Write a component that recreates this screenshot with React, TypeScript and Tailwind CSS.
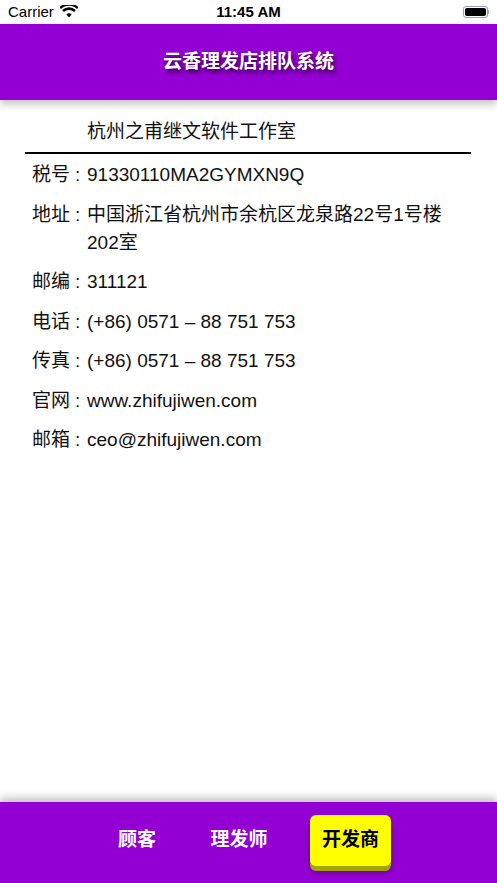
const rows: { label: string; value: string }[] = [
  { label: "税号", value: "91330110MA2GYMXN9Q" },
  { label: "地址", value: "中国浙江省杭州市余杭区龙泉路22号1号楼202室" },
  { label: "邮编", value: "311121" },
  { label: "电话", value: "(+86) 0571 – 88 751 753" },
  { label: "传真", value: "(+86) 0571 – 88 751 753" },
  { label: "官网", value: "www.zhifujiwen.com" },
  { label: "邮箱", value: "ceo@zhifujiwen.com" },
];

const font = {
  fontFamily: '"Liberation Sans", "Noto Sans CJK SC", sans-serif',
};

function StatusBar() {
  return (
    <div className="h-6 flex items-center justify-between px-2 bg-white text-black">
      <div className="flex items-center gap-1.5 text-[15px]">
        <span>Carrier</span>
        <svg width="18" height="13" viewBox="0 0 18 13" className="mt-[-2px]">
          <path d="M9 12.5l2.6-3a3.6 3.6 0 00-5.2 0z" fill="black" />
          <path d="M3.9 7a7.2 7.2 0 0110.2 0l1.7-1.9a9.8 9.8 0 00-13.6 0z" fill="black" />
          <path d="M1 4a11.6 11.6 0 0116 0L18.6 2.2a14.2 14.2 0 00-19.2 0z" fill="black" />
        </svg>
      </div>
      <div className="text-[15px] font-semibold absolute left-1/2 -translate-x-1/2">11:45 AM</div>
      <div className="flex items-center">
        <div className="w-[25px] h-[12px] rounded-[3px] border border-gray-400 p-[1px]">
          <div className="w-full h-full bg-black rounded-[2px]" />
        </div>
        <div className="w-[1.5px] h-[4px] bg-gray-400 rounded-r" />
      </div>
    </div>
  );
}

export default function App() {
  return (
    <div className="w-[497px] h-[883px] flex flex-col bg-white relative overflow-hidden" style={font}>
      <StatusBar />

      {/* Title bar */}
      <div className="h-[76px] bg-[#9400d3] flex items-center justify-center shadow-[0_4px_8px_rgba(0,0,0,0.25)] z-10">
        <span className="text-white text-[19px] font-bold [text-shadow:2px_3px_4px_rgba(40,0,60,0.9)]">
          云香理发店排队系统
        </span>
      </div>

      {/* Content */}
      <div className="flex-1 px-[25px] pt-[18px] text-[19px] text-[#111]">
        <div className="pl-[62px] leading-[28px] pb-[6px]">杭州之甫继文软件工作室</div>
        <div className="h-[2px] bg-black w-[446px]" />
        <div className="flex flex-col gap-[11.5px] pt-[7px] pl-[7px]">
          {rows.map((r) => (
            <div key={r.label} className="flex leading-[28px]">
              <span className="w-[55px] shrink-0 flex">
                <span>{r.label}</span>
                <span className="ml-[5px]">:</span>
              </span>
              <span className="w-[370px]">{r.value}</span>
            </div>
          ))}
        </div>
      </div>

      {/* Tab bar */}
      <div className="h-[81px] bg-[#9400d3] shadow-[0_-4px_8px_rgba(0,0,0,0.25)] flex items-start pt-[12px]">
        <div className="flex items-center gap-[28px] ml-[100px]">
          <button className="w-[74px] h-[52px] text-white text-[19px] font-bold">顾客</button>
          <button className="w-[74px] h-[52px] text-white text-[19px] font-bold">理发师</button>
          <button className="w-[81px] h-[51px] ml-[6px] bg-[#ffff00] rounded-[6px] text-black text-[19px] font-bold shadow-[0_5px_0_#a3a300,0_6px_6px_rgba(0,0,0,0.35)]">
            开发商
          </button>
        </div>
      </div>
    </div>
  );
}
